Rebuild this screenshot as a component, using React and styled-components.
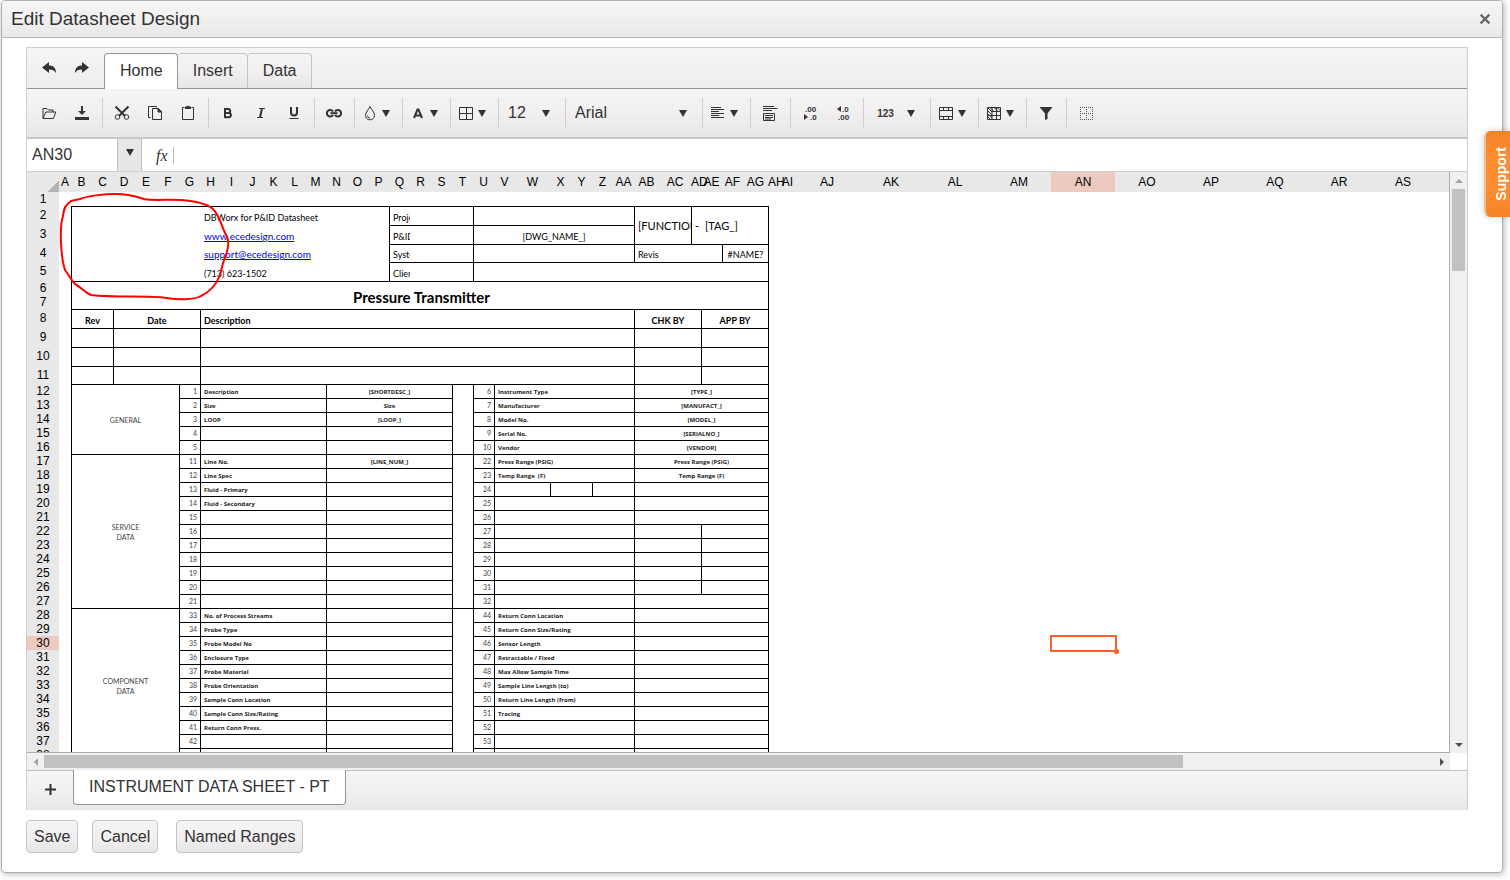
import React, { useState } from 'react'
import styled, { createGlobalStyle, css } from 'styled-components'

const GlobalStyle = createGlobalStyle`
* { box-sizing: border-box; }
body {
  margin: 0;
  background: #fff;
  color: #333;
  font-family: "Liberation Sans", Arial, sans-serif;
  font-size: 16px;
}
button, input, select {
  font: inherit;
  color: inherit;
}
`

const gradient = css`
background: linear-gradient(#f6f5f6, #f1eff0 50%, #e8e7e6);
`

const Dialog = styled.div`
display: flex;
flex-direction: column;
height: calc(100vh - 7px);
min-height: 600px;
margin: 0 7px 7px 1px;
border: 1px solid #b0b0b0;
border-radius: 4px;
box-shadow: 1px 1px 6px rgba(0, 0, 0, 0.3);
`

const DialogHeader = styled.header`
${gradient}
display: flex;
align-items: center;
justify-content: space-between;
height: 37px;
padding: 0 9px;
border-bottom: 1px solid #b8b8b8;
border-radius: 4px 4px 0 0;
`

const DialogTitle = styled.h1`
margin: 0;
font-size: 19px;
font-weight: normal;
`

const CloseButton = styled.button`
display: flex;
align-items: center;
justify-content: center;
width: 16px;
height: 16px;
padding: 0;
border: none;
background: none;
`

const DialogBody = styled.div`
display: flex;
flex: 1;
flex-direction: column;
min-height: 0;
padding: 9px 34px 19px 24px;
`

const Spreadsheet = styled.div`
display: flex;
flex: 1;
flex-direction: column;
min-height: 0;
border: 1px solid #cfcfcf;
border-bottom: none;
`

const TabBar = styled.div`
display: flex;
align-items: flex-end;
height: 41px;
padding-left: 6px;
border-bottom: 1px solid #959595;
background: linear-gradient(#f5f5f5, #efeded);
`

const History = styled.div`
display: flex;
align-items: center;
align-self: stretch;
margin-right: 5px;
`

const Tab = styled.button`
${gradient}
height: 35px;
padding: 0 14px 0 15px;
border: 1px solid #c4c4c4;
border-left-width: 0;
border-bottom: none;
border-radius: 4px 4px 0 0;
${(p) => p.$active && css`
height: 36px;
margin-bottom: -1px;
padding-bottom: 2px;
border-left-width: 1px;
border-color: #959595;
background: #fff;
`}
`

const Toolbar = styled.div`
${gradient}
display: flex;
align-items: center;
height: 50px;
padding-left: 3px;
border-bottom: 2px solid #c8c8c8;
`

const Group = styled.div`
display: flex;
align-items: center;
height: 30px;
padding: 0 3px;
border-right: 1px solid ${(p) => (p.$last ? 'transparent' : '#cfcfcf')};
`

const ToolButton = styled.button`
display: flex;
align-items: center;
justify-content: center;
gap: 4px;
width: ${(p) => p.$width || 33}px;
height: 30px;
padding: 0 2px 0 0;
border: none;
background: none;
font-size: 10px;
font-weight: bold;
`

const DropButton = styled(ToolButton)`
justify-content: flex-start;
width: 41px;
padding: 0 0 0 4px;
`

const SelectBox = styled.label`
display: flex;
position: relative;
align-items: center;
width: ${(p) => p.$width}px;
height: 30px;
`

const Select = styled.select`
width: 100%;
height: 30px;
padding: 0 24px 2px 6px;
border: none;
background: none;
appearance: none;
`

const SelectArrow = styled.span`
position: absolute;
right: 12px;
display: flex;
pointer-events: none;
`

const NumberLabel = styled.span`
margin-right: 9px;
`

const FormulaBar = styled.div`
display: flex;
align-items: center;
height: 33px;
border-bottom: 1px solid #cfcfcf;
background: #fff;
`

const NameBox = styled.input`
width: 90px;
height: 32px;
padding: 0 5px;
border: none;
outline: none;
`

const NameArrow = styled.button`
display: flex;
align-items: center;
justify-content: center;
width: 25px;
height: 32px;
padding: 0 0 6px;
border: 1px solid #c0c0c0;
border-width: 0 1px;
background: #e8e7e6;
`

const Fx = styled.label`
margin-left: 14px;
padding-right: 5px;
border-right: 1px solid #bbb;
font-family: "Liberation Serif", serif;
font-size: 16px;
font-style: italic;
line-height: 17px;
`

const FormulaInput = styled.input`
flex: 1;
height: 30px;
border: none;
outline: none;
`

const View = styled.div`
display: grid;
flex: 1;
grid-template-columns: minmax(0, 1fr) 17px;
grid-template-rows: minmax(0, 1fr) 17px;
min-height: 0;
`

const Pane = styled.div`
position: relative;
overflow: hidden;
border-right: 1px solid #aeaeae;
border-bottom: 1px solid #aeaeae;
`

const Scribble = styled.svg`
position: absolute;
top: 20px;
left: 29px;
pointer-events: none;
`

const Track = styled.div`
display: flex;
flex-direction: ${(p) => (p.$vertical ? 'column' : 'row')};
align-items: center;
justify-content: space-between;
background: #f0f0f0;
`

const TrackRun = styled.div`
flex: 1;
align-self: stretch;
padding: ${(p) => (p.$vertical ? '0 2px' : '2px 0')};
`

const Thumb = styled.div`
width: ${(p) => (p.$vertical ? '100%' : '82%')};
height: ${(p) => (p.$vertical ? '15%' : '100%')};
background: #c1c1c1;
`

const TrackButton = styled.button`
display: flex;
align-items: center;
justify-content: center;
width: 17px;
height: 17px;
padding: 0;
border: none;
background: none;
`

const SheetBar = styled.div`
${gradient}
display: flex;
height: 40px;
border-top: 1px solid #c0c0c0;
`

const AddSheet = styled.button`
width: 46px;
padding: 0;
border: none;
background: none;
`

const SheetTab = styled.button`
height: 35px;
margin-top: -1px;
padding: 0 15px;
border: 1px solid #959595;
border-top: none;
border-radius: 0 0 4px 4px;
background: #fff;
`

const Actions = styled.footer`
display: flex;
padding-top: 10px;
`

const ActionButton = styled.button`
${gradient}
height: 33px;
margin-right: ${(p) => p.$gap || 0}px;
padding: 0 7px;
border: 1px solid #c4c4c4;
border-radius: 4px;
`

const Support = styled.button`
position: fixed;
top: 131px;
right: 0;
width: 26px;
height: 86px;
padding: 0;
border: none;
border-left: 2px solid #efc09a;
border-radius: 6px 0 0 6px;
background: linear-gradient(#f58426, #ff8c2e 30%, #ff8c2e 70%, #f58426);
box-shadow: 0 0 6px rgba(0, 0, 0, 0.2);
color: #fff;
font-size: 14px;
font-weight: bold;
`

const SupportText = styled.span`
display: block;
padding-right: 7px;
writing-mode: vertical-rl;
transform: rotate(180deg);
`

const Table = styled.table`
width: ${(p) => p.$width}px;
table-layout: fixed;
border-collapse: separate;
border-spacing: 0;
color: #000;
font-family: Lato, "Open Sans", sans-serif;
`

const Heading = styled.th`
height: ${(p) => p.$height}px;
padding: 0;
background: ${(p) => (p.$active ? '#eccac0' : '#e8e8e8')};
font-family: "Liberation Sans", Arial, sans-serif;
font-size: 12px;
font-weight: normal;
line-height: 13px;
text-align: center;
white-space: nowrap;
`

const Corner = styled.td`
height: 20px;
padding: 0;
background: linear-gradient(135deg, transparent 50%, #b4b4b4 50%) right bottom / 12px 12px no-repeat #e8e8e8;
`

const kinds = {
  title: css`
font-size: 15px;
font-weight: bold;
line-height: 24px;
text-align: center;
`,
  tag: css`
font-size: 11px;
vertical-align: middle;
`,
  head: css`
font-weight: bold;
`,
  link: css`
font-size: 10px;
`,
  small: css`
font-family: "Open Sans", Lato, sans-serif;
font-size: 6px;
font-weight: bold;
line-height: 11px;
color: #222;
`,
  num: css`
padding-right: 3px;
font-size: 7px;
line-height: 11px;
color: #444;
text-align: right;
vertical-align: middle;
`,
  group: css`
font-size: 7px;
line-height: 10px;
color: #444;
text-align: center;
vertical-align: middle;
`,
}

const Cell = styled.td`
position: relative;
padding: 0 0 0 ${(p) => (p.$left ? 3 : 4)}px;
overflow: ${(p) => (p.$open ? 'visible' : 'hidden')};
border: 0 solid #000;
border-top-width: ${(p) => (p.$top ? 1 : 0)}px;
border-left-width: ${(p) => (p.$left ? 1 : 0)}px;
font-size: 9px;
line-height: 15px;
vertical-align: bottom;
white-space: pre;
${(p) => kinds[p.$kind]}
${(p) => p.$center && css`
padding-left: 0;
text-align: center;
`}
`

const CellLink = styled.a`
color: #00e;
`

const Selection = styled.div`
position: absolute;
inset: -1px -2px -2px -1px;
border: 2px solid #f9602c;

&::after {
  content: "";
  position: absolute;
  right: -4px;
  bottom: -4px;
  width: 5px;
  height: 5px;
  border-radius: 2px;
  background: #f9602c;
}
`

// column widths, A to AT
const colWidths = [
  12, 21, 21, 22, 22, 22, 21, 21, 21, 21, 21, 21, 21, 21, 21, 21, 21, 21, 21, 21, 21, 21, 35, 21, 21, 21,
  21, 25, 32, 10, 21, 21, 25, 12, 15, 64, 64, 64, 64, 64, 64, 64, 64, 64, 64, 64,
]
const rowHeights = { 2: 19, 3: 19, 4: 18, 5: 19, 8: 19, 9: 19, 10: 19, 11: 18 }
const rowCount = 39

const colName = (i) => (i < 26 ? String.fromCharCode(65 + i) : 'A' + String.fromCharCode(39 + i))
const colIndex = (name) => (name.length === 1 ? name.charCodeAt(0) - 65 : name.charCodeAt(1) - 39)

const tiles = {}
const put = (row, from, to, text = '', opts = {}) => {
  const span = colIndex(to) - colIndex(from) + 1
  tiles[row + ':' + colIndex(from)] = { text, span, rows: 1, top: true, left: true, ...opts }
}

put(2, 'B', 'G', '', { rows: 4 })
put(2, 'H', 'P', 'DBWorx for P&ID Datasheet', { left: false })
put(3, 'H', 'P', 'www.ecedesign.com', { left: false, top: false, kind: 'link', href: 'http://www.ecedesign.com' })
put(4, 'H', 'P', 'support@ecedesign.com', { left: false, top: false, kind: 'link', href: 'mailto:support@ecedesign.com' })
put(5, 'H', 'P', '(713) 623-1502', { left: false, top: false })
const labels = ['Project', 'P&ID No', 'System', 'Client']
labels.forEach((text, i) => {
  put(i + 2, 'Q', 'Q', text)
  put(i + 2, 'R', 'T', '', { left: false })
})
put(2, 'U', 'AA')
put(3, 'U', 'AA', '[DWG_NAME_]', { center: true })
put(4, 'U', 'AA')
put(5, 'U', 'AG')
put(2, 'AB', 'AC', '[FUNCTION_]', { rows: 2, kind: 'tag' })
put(2, 'AD', 'AD', '-', { rows: 2, kind: 'tag' })
put(2, 'AE', 'AG', '[TAG_]', { rows: 2, kind: 'tag', left: false })
put(4, 'AB', 'AB', 'Revis')
put(4, 'AC', 'AE', '', { left: false })
put(4, 'AF', 'AG', '#NAME?', { center: true })
put(6, 'B', 'AG', 'Pressure Transmitter', { rows: 2, kind: 'title' })
for (let r = 8; r < 12; r++) {
  const first = r === 8
  put(r, 'B', 'C', first ? 'Rev' : '', { kind: 'head', center: true })
  put(r, 'D', 'G', first ? 'Date' : '', { kind: 'head', center: true })
  put(r, 'H', 'AA', first ? 'Description' : '', { kind: 'head' })
  put(r, 'AB', 'AD', first ? 'CHK BY' : '', { kind: 'head', center: true })
  put(r, 'AE', 'AG', first ? 'APP BY' : '', { kind: 'head', center: true })
}

const sections = [
  {
    name: 'GENERAL', row: 12, size: 5, left: 1, right: 6,
    leftItems: [['Description', '[SHORTDESC_]'], ['Size', 'Size'], ['LOOP', '[LOOP_]']],
    rightItems: [
      ['Instrument Type', '[TYPE_]'], ['Manufacturer', '[MANUFACT_]'], ['Model No.', '[MODEL_]'],
      ['Serial No.', '[SERIALNO_]'], ['Vendor', '[VENDOR]'],
    ],
  },
  {
    name: 'SERVICE\nDATA', row: 17, size: 11, left: 11, right: 22,
    leftItems: [['Line No.', '[LINE_NUM_]'], ['Line Spec'], ['Fluid - Primary'], ['Fluid - Secondary']],
    rightItems: [['Press Range (PSIG)', 'Press Range (PSIG)'], ['Temp Range  (F)', 'Temp Range (F)']],
  },
  {
    name: 'COMPONENT\nDATA', row: 28, size: 11, left: 33, right: 44,
    leftItems: [
      ['No. of Process Streams'], ['Probe Type'], ['Probe Model No'], ['Enclosure Type'], ['Probe Material'],
      ['Probe Orientation'], ['Sample Conn Location'], ['Sample Conn Size/Rating'], ['Return Conn Press.'],
    ],
    rightItems: [
      ['Return Conn Location'], ['Return Conn Size/Rating'], ['Sensor Length'], ['Retractable / Fixed'],
      ['Max Allow Sample Time'], ['Sample Line Length (to)'], ['Return Line Length (from)'], ['Tracing'],
    ],
  },
]

sections.forEach((s) => {
  put(s.row, 'B', 'F', s.name, { rows: s.size, kind: 'group', center: true })
  put(s.row, 'T', 'T', '', { rows: s.size })
  for (let i = 0; i < s.size; i++) {
    const r = s.row + i
    const [ll = '', lv = ''] = s.leftItems[i] || []
    const [rl = '', rv = ''] = s.rightItems[i] || []
    put(r, 'G', 'G', String(s.left + i), { kind: 'num' })
    put(r, 'H', 'M', ll, { kind: 'small' })
    put(r, 'N', 'S', lv, { kind: 'small', center: true })
    put(r, 'U', 'U', String(s.right + i), { kind: 'num' })
    if (r === 19) {
      put(r, 'V', 'W')
      put(r, 'X', 'Y')
      put(r, 'Z', 'AA')
    } else {
      put(r, 'V', 'AA', rl, { kind: 'small' })
    }
    if (r >= 22 && r <= 26) {
      put(r, 'AB', 'AD')
      put(r, 'AE', 'AG')
    } else {
      put(r, 'AB', 'AG', rv, { kind: 'small', center: true })
    }
  }
})

const buildRow = (row) => {
  const cells = []
  const framed = row >= 2 && row <= 38
  let c = 0
  while (c < colWidths.length) {
    const tile = tiles[row + ':' + c]
    if (tile) {
      cells.push({ ...tile, col: c })
      c += tile.span
    } else {
      // columns B to AG of the form are covered by tiles that start higher up
      if (!framed || c < 1 || c > 32) {
        cells.push({ col: c, text: '', span: 1, rows: 1, left: framed && c === 33 })
      }
      c++
    }
  }
  return cells
}

const rows = Array.from({ length: rowCount }, (_, i) => ({ n: i + 1, cells: buildRow(i + 1) }))
const tableWidth = colWidths.reduce((a, b) => a + b, 32)

const Icon = ({ children, size = 16 }) => (
  <svg width={size} height={size} viewBox="0 0 16 16" fill="none" stroke="#333" aria-hidden="true">
    {children}
  </svg>
)

const Arrow = ({ dir = 'down', color = '#333', size = 8 }) => {
  const points = { down: '0,1 8,1 4,8', up: '0,6 8,6 4,2', left: '6,0 6,8 2,4', right: '2,0 2,8 6,4', low: '0,2 8,2 4,6' }
  return (
    <svg width={size} height={size} viewBox="0 0 8 8" aria-hidden="true">
      <polygon points={points[dir]} fill={color} />
    </svg>
  )
}

const UndoIcon = () => (
  <Icon>
    <path d="M1 7.5 8 2v3.4c4.5 0 7 2.6 7 7.6-1.5-2.7-3.5-3.6-7-3.6V13z" fill="#333" stroke="none" />
  </Icon>
)
const RedoIcon = () => (
  <Icon>
    <path d="M15 7.5 8 2v3.4c-4.5 0-7 2.6-7 7.6 1.5-2.7 3.5-3.6 7-3.6V13z" fill="#333" stroke="none" />
  </Icon>
)
const OpenIcon = () => (
  <Icon>
    <path d="M2 13.5V3.5h4l1.5 1.5H12v2M2 13.5 4.8 7h10L12.5 13.5z" />
  </Icon>
)
const DownloadIcon = () => (
  <Icon>
    <path d="M1 12h14v3H1zM7 1h2v5h3L8 10 4 6h3z" fill="#333" stroke="none" />
  </Icon>
)
const CutIcon = () => (
  <Icon>
    <path d="M1.5 1.5 11 11M14.5 1.5 5 11" strokeWidth="2" />
    <circle cx="3.5" cy="12" r="2.3" />
    <circle cx="12.5" cy="12" r="2.3" />
  </Icon>
)
const CopyIcon = () => (
  <Icon>
    <path d="M3.5 12.5h-2v-11h8v1M5.5 3.5h6l3 3v8h-9z" />
    <path d="M11 3.5v3.5h3.5z" fill="#333" />
  </Icon>
)
const PasteIcon = () => (
  <Icon>
    <path d="M4.5 2.5h-2v12h11v-12h-2" />
    <path d="M5 1.5h1.5L8 .5l1.5 1H11V4H5z" fill="#333" stroke="none" />
  </Icon>
)
const BoldIcon = () => (
  <Icon>
    <path d="M5 3v10M5 4h3.2a2 2 0 0 1 0 4H5M5 8h3.8a2 2 0 0 1 0 4.2H5" strokeWidth="2" />
  </Icon>
)
const ItalicIcon = () => (
  <Icon>
    <path d="M6 3.5h6M4 12.5h6" />
    <path d="M9 3.5 7 12.5" strokeWidth="2" />
  </Icon>
)
const UnderlineIcon = () => (
  <Icon>
    <path d="M5 2v5.5a3 3 0 0 0 6 0V2" strokeWidth="2" />
    <path d="M3.5 13.5h9" />
  </Icon>
)
const LinkIcon = () => (
  <Icon>
    <path d="M7 6.5C6.500 5.500 5.500 5 4 5a3 3.200 0 0 0 0 6.500c1.500 0 2.500-.5 3-1.500M9 6.500C9.500 5.500 10.500 5 12 5a3 3.200 0 0 1 0 6.500c-1.500 0-2.500-.5-3-1.500" strokeWidth="2" />
    <path d="M4.5 8.2h7" strokeWidth="2" />
  </Icon>
)
const DropIcon = () => (
  <Icon>
    <path d="M8 1.5C6.500 5 3.500 7 3.500 10.500a4.500 4.300 0 0 0 9 0C12.500 7 9.500 5 8 1.500z" />
    <path d="M5.5 10.5c0 1.5 1 2.5 2.5 2.5" />
  </Icon>
)
const ColorIcon = () => (
  <Icon>
    <path d="M4 13 7.5 4.5h1L12 13M5.2 10.5h5.600" strokeWidth="2" />
  </Icon>
)
const BordersIcon = () => (
  <Icon>
    <path d="M1.5 2.5h13v12h-13zM8.5 2.5v12M1.5 8.5h13" />
  </Icon>
)
const AlignIcon = () => (
  <Icon>
    <path d="M1 2.5h10M1 4.5h13M1 6.5h8M1 8.5h13M1 10.5h8M1 12.5h13" />
  </Icon>
)
const WrapIcon = () => (
  <Icon>
    <path d="M1 1.5h11M1 3.5h14.500M1 5.5h9M1.5 8.5h11v7h-11zM3 10.5h8M3 12.5h8M3 14h6" />
  </Icon>
)
const IconText = styled.text`
font-family: "Liberation Sans", Arial, sans-serif;
font-size: 8px;
fill: #333;
stroke: none;
`
const DecreaseIcon = () => (
  <Icon>
    <IconText x="3" y="7">.00</IconText>
    <IconText x="8" y="15">.0</IconText>
    <polygon points="2,9 6,12 2,15" fill="#333" stroke="none" />
  </Icon>
)
const IncreaseIcon = () => (
  <Icon>
    <IconText x="7" y="7">.0</IconText>
    <IconText x="3" y="15">.00</IconText>
    <polygon points="6,1 2,4 6,7" fill="#333" stroke="none" />
  </Icon>
)
const MergeIcon = () => (
  <Icon>
    <path d="M1.5 2.5h13v12h-13zM1.5 5.5h13M1.5 11.5h13M5.5 2.5v3M10.5 2.5v3M5.5 11.5v3M10.5 11.5v3" />
  </Icon>
)
const FreezeIcon = () => (
  <Icon>
    <path d="M1.5 2.5h13v12h-13zM6 6.5h8.500M6 2.5v12M10.5 2.5v12M1.5 10.5h13M2 3l4 4M4 2.5l4 4M8 2.5l4 4M11 2.5l3 3M2 6l4 4M2 9l4 4M2 12l2 2" />
  </Icon>
)
const FilterIcon = () => (
  <Icon>
    <path d="M1.5 2h13L9.5 8.5V14L7 15V8.5z" fill="#333" stroke="none" />
  </Icon>
)
const GridlinesIcon = () => (
  <Icon>
    <path d="M2 2.5h13M2 8.5h13M2 14.5h13M2.5 2v13M8.5 2v13M14.5 2v13" stroke="#555" strokeDasharray="1 1" />
  </Icon>
)

const Tool = ({ label, icon: I }) => (
  <ToolButton aria-label={label}>
    <I />
  </ToolButton>
)

const DropTool = ({ label, icon: I }) => (
  <Group>
    <DropButton aria-label={label}>
      <I />
      <Arrow />
    </DropButton>
  </Group>
)

const App = () => {
  const [tab, setTab] = useState('Home')
  const [cellName, setCellName] = useState('AN30')
  const [formula, setFormula] = useState('')

  return (
    <>
      <GlobalStyle />
      <Dialog role="dialog" aria-labelledby="dialog-title">
        <DialogHeader>
          <DialogTitle id="dialog-title">Edit Datasheet Design</DialogTitle>
          <CloseButton aria-label="Close">
            <Icon size={14}>
              <path d="m3 3 10 10M13 3 3 13" stroke="#666" strokeWidth="2.5" />
            </Icon>
          </CloseButton>
        </DialogHeader>
        <DialogBody>
          <Spreadsheet>
            <TabBar>
              <History>
                <Tool label="Undo" icon={UndoIcon} />
                <Tool label="Redo" icon={RedoIcon} />
              </History>
              {['Home', 'Insert', 'Data'].map((name) => (
                <Tab key={name} $active={tab === name} onClick={() => setTab(name)}>
                  {name}
                </Tab>
              ))}
            </TabBar>
            <Toolbar>
              <Group>
                <Tool label="Open" icon={OpenIcon} />
                <Tool label="Export" icon={DownloadIcon} />
              </Group>
              <Group>
                <Tool label="Cut" icon={CutIcon} />
                <Tool label="Copy" icon={CopyIcon} />
                <Tool label="Paste" icon={PasteIcon} />
              </Group>
              <Group>
                <Tool label="Bold" icon={BoldIcon} />
                <Tool label="Italic" icon={ItalicIcon} />
                <Tool label="Underline" icon={UnderlineIcon} />
              </Group>
              <Group>
                <Tool label="Link" icon={LinkIcon} />
              </Group>
              <DropTool label="Background" icon={DropIcon} />
              <DropTool label="Text color" icon={ColorIcon} />
              <DropTool label="Borders" icon={BordersIcon} />
              <Group>
                <SelectBox $width={60}>
                  <Select aria-label="Font size" defaultValue="12">
                    <option>12</option>
                  </Select>
                  <SelectArrow>
                    <Arrow />
                  </SelectArrow>
                </SelectBox>
              </Group>
              <Group>
                <SelectBox $width={130}>
                  <Select aria-label="Font" defaultValue="Arial">
                    <option>Arial</option>
                  </Select>
                  <SelectArrow>
                    <Arrow />
                  </SelectArrow>
                </SelectBox>
              </Group>
              <DropTool label="Align" icon={AlignIcon} />
              <Group>
                <Tool label="Wrap text" icon={WrapIcon} />
              </Group>
              <Group>
                <Tool label="Decrease decimal" icon={DecreaseIcon} />
                <Tool label="Increase decimal" icon={IncreaseIcon} />
              </Group>
              <Group>
                <ToolButton aria-label="Number format" $width={60}>
                  <NumberLabel>123</NumberLabel>
                  <Arrow />
                </ToolButton>
              </Group>
              <DropTool label="Merge cells" icon={MergeIcon} />
              <DropTool label="Freeze panes" icon={FreezeIcon} />
              <Group>
                <Tool label="Filter" icon={FilterIcon} />
              </Group>
              <Group $last>
                <Tool label="Gridlines" icon={GridlinesIcon} />
              </Group>
            </Toolbar>
            <FormulaBar>
              <NameBox aria-label="Name box" value={cellName} onChange={(e) => setCellName(e.target.value)} />
              <NameArrow aria-label="Names">
                <Arrow />
              </NameArrow>
              <Fx htmlFor="formula">fx</Fx>
              <FormulaInput id="formula" value={formula} onChange={(e) => setFormula(e.target.value)} />
            </FormulaBar>
            <View>
              <Pane>
                <Table $width={tableWidth}>
                  <colgroup>
                    <col width={32} />
                    {colWidths.map((w, i) => (
                      <col key={i} width={w} />
                    ))}
                  </colgroup>
                  <thead>
                    <tr>
                      <Corner />
                      {colWidths.map((w, i) => (
                        <Heading key={i} scope="col" $height={20} $active={colName(i) === 'AN'}>
                          {colName(i)}
                        </Heading>
                      ))}
                    </tr>
                  </thead>
                  <tbody>
                    {rows.map((row) => (
                      <tr key={row.n}>
                        <Heading scope="row" $height={rowHeights[row.n] || 14} $active={row.n === 30}>
                          {row.n}
                        </Heading>
                        {row.cells.map((cell) => {
                          const selected = row.n === 30 && colName(cell.col) === 'AN'
                          return (
                            <Cell
                              key={cell.col}
                              colSpan={cell.span}
                              rowSpan={cell.rows}
                              $kind={cell.kind || (cell.text ? '' : 'small')}
                              $top={cell.top}
                              $left={cell.left}
                              $center={cell.center}
                              $open={selected}>
                              {cell.href ? <CellLink href={cell.href}>{cell.text}</CellLink> : cell.text}
                              {selected && <Selection />}
                            </Cell>
                          )
                        })}
                      </tr>
                    ))}
                  </tbody>
                </Table>
                <Scribble width="176" height="112" fill="none" stroke="#f00" strokeWidth="2" strokeLinejoin="round">
                  <path d="M24 7C31 4 48 2 60 2 72 2 82 5 88 7 100 9 110 7 125 8 139 9 150 11 157 17 164 24 165 34 171 45 174 51 172 58 169 66 166 71 166 79 163 85 160 93 155 99 145 104 138 108 121 108 111 106 92 103 61 106 35 103 28 100 25 95 19 92 15 88 13 83 9 78 5 66 3 36 7 24 8 15 10 13 15 9z" />
                </Scribble>
              </Pane>
              <Track $vertical>
                <TrackButton aria-label="Scroll up">
                  <Arrow dir="up" color="#a0a0a0" />
                </TrackButton>
                <TrackRun $vertical>
                  <Thumb $vertical />
                </TrackRun>
                <TrackButton aria-label="Scroll down">
                  <Arrow dir="low" color="#505050" />
                </TrackButton>
              </Track>
              <Track>
                <TrackButton aria-label="Scroll left">
                  <Arrow dir="left" color="#a0a0a0" />
                </TrackButton>
                <TrackRun>
                  <Thumb />
                </TrackRun>
                <TrackButton aria-label="Scroll right">
                  <Arrow dir="right" color="#505050" />
                </TrackButton>
              </Track>
            </View>
            <SheetBar>
              <AddSheet aria-label="Add sheet">
                <Icon>
                  <path d="M3 8.5h11M8.5 3v11" strokeWidth="2" />
                </Icon>
              </AddSheet>
              <SheetTab>INSTRUMENT DATA SHEET - PT</SheetTab>
            </SheetBar>
          </Spreadsheet>
          <Actions>
            <ActionButton $gap={14}>Save</ActionButton>
            <ActionButton $gap={18}>Cancel</ActionButton>
            <ActionButton>Named Ranges</ActionButton>
          </Actions>
        </DialogBody>
      </Dialog>
      <Support>
        <SupportText>Support</SupportText>
      </Support>
    </>
  )
}

export default App
